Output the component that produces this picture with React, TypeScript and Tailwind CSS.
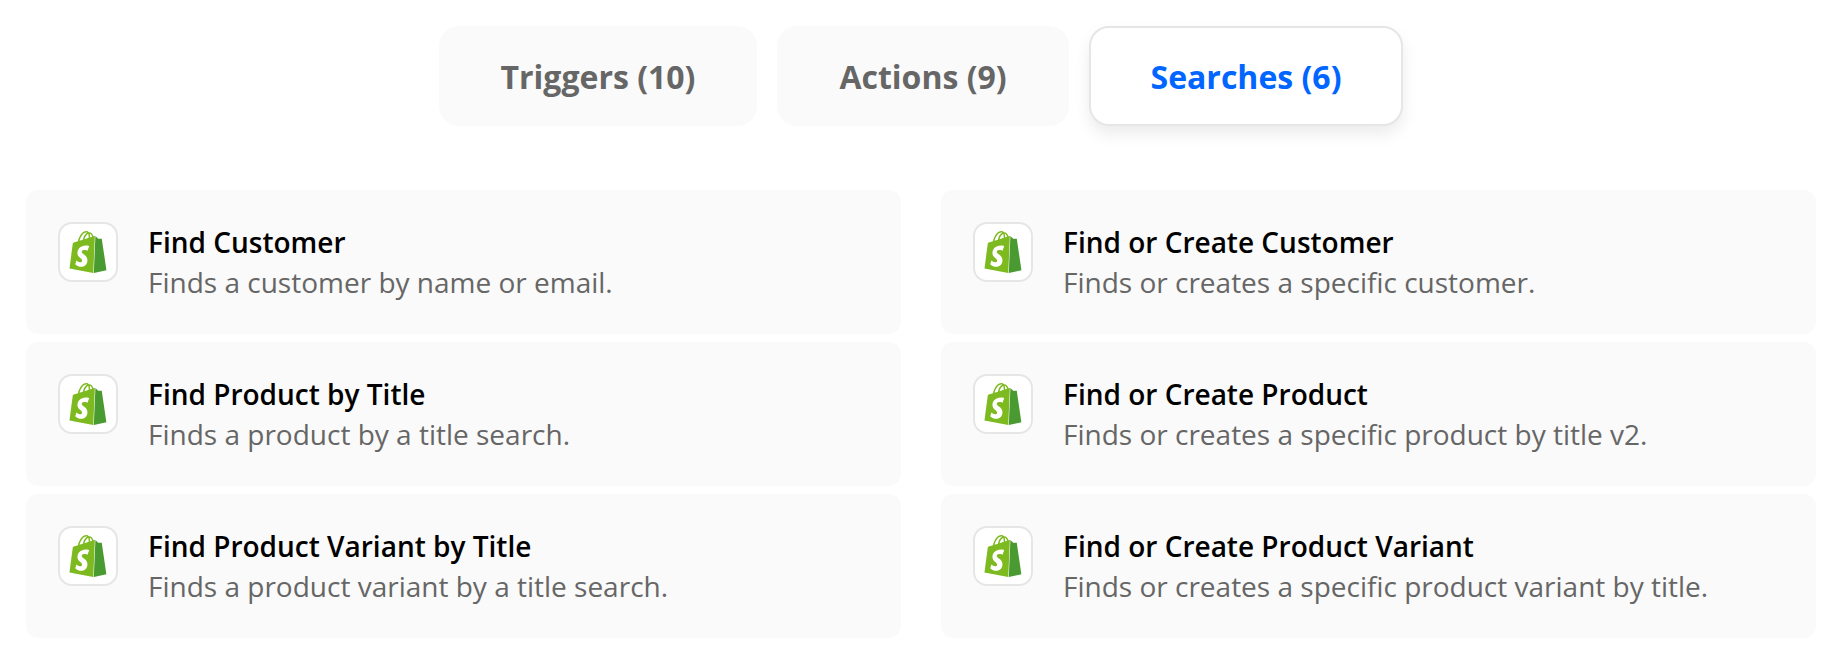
const font = "font-['Open_Sans',sans-serif]"

const items = [
  { title: "Find Customer", text: "Finds a customer by name or email." },
  { title: "Find or Create Customer", text: "Finds or creates a specific customer." },
  { title: "Find Product by Title", text: "Finds a product by a title search." },
  { title: "Find or Create Product", text: "Finds or creates a specific product by title v2." },
  { title: "Find Product Variant by Title", text: "Finds a product variant by a title search." },
  { title: "Find or Create Product Variant", text: "Finds or creates a specific product variant by title." },
]

function ShopifyIcon() {
  return (
    <div className="w-[60px] h-[60px] shrink-0 bg-white border-2 border-[#e6e6e6] rounded-[14px] flex items-center justify-center">
      <svg viewBox="0 0 24 24" className="w-[42px] h-[42px]">
        <path
          fill="#4a9a32"
          d="M15.337 23.979l7.216-1.561s-2.604-17.613-2.625-17.73c-.018-.116-.114-.192-.211-.192s-1.929-.136-1.929-.136-1.275-1.274-1.439-1.411c-.045-.037-.075-.057-.121-.074l-.914 21.104h.023z"
        />
        <path
          fill="#7dba1f"
          d="M11.71 11.305s-.81-.424-1.774-.424c-1.447 0-1.504.906-1.504 1.141 0 1.232 3.24 1.715 3.24 4.629 0 2.295-1.44 3.76-3.406 3.76-2.354 0-3.54-1.465-3.54-1.465l.646-2.086s1.245 1.066 2.28 1.066c.675 0 .975-.545.975-.932 0-1.619-2.654-1.694-2.654-4.359-.034-2.237 1.571-4.416 4.827-4.416 1.257 0 1.875.361 1.875.361l-.945 2.715-.02.01zM11.17.83c.136 0 .271.038.405.135-.984.465-2.064 1.639-2.508 3.992-.656.213-1.293.405-1.889.578C7.697 3.75 8.951.84 11.17.84V.83zm1.235 2.949v.135c-.754.232-1.583.484-2.394.736.466-1.777 1.333-2.645 2.085-2.971.193.501.309 1.176.309 2.1zm.539-2.234c.694.074 1.141.867 1.429 1.755-.349.114-.735.231-1.158.366v-.252c0-.752-.096-1.371-.271-1.871v.002zm2.992 1.289c-.02 0-.06.021-.078.021s-.289.075-.714.21c-.423-1.233-1.176-2.37-2.508-2.37h-.115C12.135.209 11.669 0 11.265 0 8.159 0 6.675 3.877 6.21 5.846c-1.194.365-2.063.636-2.16.674-.675.213-.694.232-.772.87-.075.462-1.83 14.063-1.83 14.063L15.009 24l.927-21.166z"
        />
      </svg>
    </div>
  )
}

export default function App() {
  return (
    <div className={`${font} w-[1834px] h-[670px] bg-white overflow-hidden pt-[26px] pl-[26px] pr-[18px]`}>
      {/* Tabs */}
      <div className="flex justify-center items-start gap-5">
        <button className="w-[318px] h-[100px] rounded-[20px] bg-[#fafafa] text-[#666666] text-[32px] font-bold pt-0.5">
          Triggers (10)
        </button>
        <button className="w-[292px] h-[100px] rounded-[20px] bg-[#fafafa] text-[#666666] text-[32px] font-bold pt-0.5">
          Actions (9)
        </button>
        <button className="w-[314px] h-[100px] rounded-[20px] bg-white border-2 border-[#e6e6e6] text-[#0066ff] text-[32px] font-bold pt-0.5 shadow-[0_8px_16px_rgba(0,0,0,0.08)]">
          Searches (6)
        </button>
      </div>

      {/* Search list */}
      <div className="grid grid-cols-2 gap-x-10 gap-y-2 mt-16">
        {items.map((item) => (
          <div key={item.title} className="h-36 rounded-xl bg-[#fafafa] flex gap-[30px] p-8">
            <ShopifyIcon />
            <div className="text-[28px] leading-10">
              <div className="font-semibold text-black">{item.title}</div>
              <div className="text-[#666666]">{item.text}</div>
            </div>
          </div>
        ))}
      </div>
    </div>
  )
}
